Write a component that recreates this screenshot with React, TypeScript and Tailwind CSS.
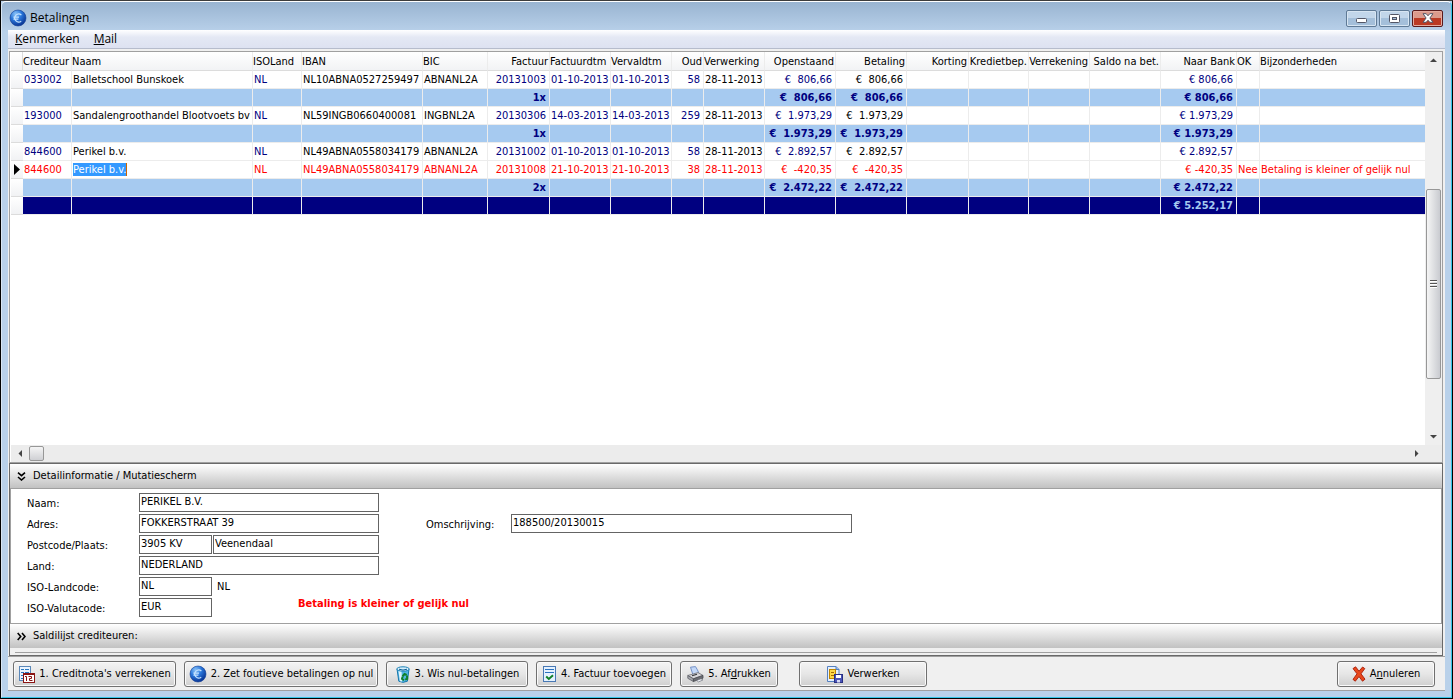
import type { ReactNode } from "react";

type Column = {
    title: string;
    width: string;
    right?: boolean;
    navy?: boolean;
};

const columns: Column[] = [
    { title: "Crediteur", width: "w-[49px]", navy: true },
    { title: "Naam", width: "w-[181px]" },
    { title: "ISOLand", width: "w-[49px]", navy: true },
    { title: "IBAN", width: "w-[121px]" },
    { title: "BIC", width: "w-[65px]" },
    { title: "Factuur", width: "w-[62px]", right: true, navy: true },
    { title: "Factuurdtm", width: "w-[61px]", navy: true },
    { title: "Vervaldtm", width: "w-[61px]", navy: true },
    { title: "Oud", width: "w-[32px]", right: true, navy: true },
    { title: "Verwerking", width: "w-[61px]" },
    { title: "Openstaand", width: "w-[71px]", right: true, navy: true },
    { title: "Betaling", width: "w-[71px]", right: true },
    { title: "Korting", width: "w-[62px]", right: true },
    { title: "Kredietbep.", width: "w-[60px]", right: true },
    { title: "Verrekening", width: "w-[61px]", right: true },
    { title: "Saldo na bet.", width: "w-[71px]", right: true },
    { title: "Naar Bank", width: "w-[76px]", right: true, navy: true },
    { title: "OK", width: "w-[23px]" },
    { title: "Bijzonderheden", width: "w-auto" },
];

type Row = {
    kind: "normal" | "error" | "subtotal" | "total";
    cells: string[];
};

const rows: Row[] = [
    {
        kind: "normal",
        cells: ["033002", "Balletschool Bunskoek", "NL", "NL10ABNA0527259497", "ABNANL2A", "20131003", "01-10-2013", "01-10-2013", "58", "28-11-2013", "€  806,66", "€  806,66", "", "", "", "", "€ 806,66", "", ""],
    },
    {
        kind: "subtotal",
        cells: ["", "", "", "", "", "1x", "", "", "", "", "€  806,66", "€  806,66", "", "", "", "", "€ 806,66", "", ""],
    },
    {
        kind: "normal",
        cells: ["193000", "Sandalengroothandel Blootvoets bv", "NL", "NL59INGB0660400081", "INGBNL2A", "20130306", "14-03-2013", "14-03-2013", "259", "28-11-2013", "€  1.973,29", "€  1.973,29", "", "", "", "", "€ 1.973,29", "", ""],
    },
    {
        kind: "subtotal",
        cells: ["", "", "", "", "", "1x", "", "", "", "", "€  1.973,29", "€  1.973,29", "", "", "", "", "€ 1.973,29", "", ""],
    },
    {
        kind: "normal",
        cells: ["844600", "Perikel b.v.", "NL", "NL49ABNA0558034179", "ABNANL2A", "20131002", "01-10-2013", "01-10-2013", "58", "28-11-2013", "€  2.892,57", "€  2.892,57", "", "", "", "", "€ 2.892,57", "", ""],
    },
    {
        kind: "error",
        cells: ["844600", "Perikel b.v.", "NL", "NL49ABNA0558034179", "ABNANL2A", "20131008", "21-10-2013", "21-10-2013", "38", "28-11-2013", "€  -420,35", "€  -420,35", "", "", "", "", "€ -420,35", "Nee", "Betaling is kleiner of gelijk nul"],
    },
    {
        kind: "subtotal",
        cells: ["", "", "", "", "", "2x", "", "", "", "", "€  2.472,22", "€  2.472,22", "", "", "", "", "€ 2.472,22", "", ""],
    },
    {
        kind: "total",
        cells: ["", "", "", "", "", "", "", "", "", "", "", "", "", "", "", "", "€ 5.252,17", "", ""],
    },
];

const rowStyles = {
    normal: "bg-white",
    error: "bg-white text-[#ff0000]",
    subtotal: "bg-[#a6caf0] font-bold text-[#000080]",
    total: "bg-[#000080] font-bold text-[#a6caf0]",
};

/* Icons */
const EuroIcon = ({ id }: { id: string }) => (
    <svg width="18" height="18" viewBox="0 0 18 18" className="shrink-0" aria-hidden="true">
        <defs>
            <radialGradient id={id} cx="0.35" cy="0.25" r="0.8">
                <stop offset="0" stopColor="#8cc4f8" />
                <stop offset="0.45" stopColor="#2b78dc" />
                <stop offset="1" stopColor="#062f8e" />
            </radialGradient>
        </defs>
        <circle cx="9" cy="9" r="8" fill={`url(#${id})`} stroke="#123f96" strokeWidth="0.6" />
        <path d="M12.4 6A4 4 0 1 0 12.2 12.2M4.4 8.2h5.6M4.4 10.2h5" fill="none" stroke="#c4e2ff" strokeWidth="1.2" />
    </svg>
);

const CreditNoteIcon = () => (
    <svg width="17" height="17" viewBox="0 0 17 17" className="shrink-0" aria-hidden="true">
        <rect x="1.5" y="0.5" width="11" height="14" fill="#eaf4ff" stroke="#5a87b8" />
        <path d="M3 3.5h3M7 3.5h4M3 6.5h3M7 6.5h4M3 9.5h3M3 12.5h3" stroke="#2a78c0" />
        <rect x="5.5" y="7.5" width="11" height="9" fill="#fff" stroke="#8b1414" />
        <path d="M5 8h12" stroke="#8b1414" strokeWidth="2" />
        <path d="M7 10.5h1.5V15M10.5 10.5h3v2h-2v2h3" fill="none" stroke="#8b1414" />
    </svg>
);

const BinIcon = () => (
    <svg width="16" height="17" viewBox="0 0 16 17" className="shrink-0" aria-hidden="true">
        <path d="M2 3h12l-1.6 12.2Q8 17.5 3.8 15.2z" fill="#52b4e4" stroke="#1677ac" />
        <path d="M3.5 5l1.3 10q1.3.7 2.4.6L6.5 5z" fill="#dff4fc" />
        <ellipse cx="8" cy="3" rx="6.2" ry="2.2" fill="#d4eefb" stroke="#1c82b8" />
        <path d="M4 3.2q4 1.8 8 0" stroke="#0c5f94" fill="none" />
        <path d="M7.5 10.4l2-2.4 2.2 1M12 9.6l.2 3.2-2 .8M9 14.2l-2-1.4.6-2" fill="none" stroke="#0f8028" strokeWidth="2" />
    </svg>
);

const InvoiceIcon = () => (
    <svg width="15" height="16" viewBox="0 0 15 16" className="shrink-0" aria-hidden="true">
        <rect x="1.5" y="0.5" width="12" height="15" fill="#e4f1ff" stroke="#4878b4" />
        <path d="M3 3.5h9M3 6.5h9" stroke="#2b72bf" />
        <path d="M4.2 10.5l2.6 2.4 4.2-3.6" fill="none" stroke="#118028" strokeWidth="2" />
    </svg>
);

const PrinterIcon = () => (
    <svg width="17" height="17" viewBox="0 0 17 17" className="shrink-0" aria-hidden="true">
        <path d="M3.5 1.2L8.5.6q2 3 3.6 7L6 9z" fill="#c3d8f8" stroke="#7591c6" />
        <path d="M.8 9.5L11 6.6l5 2.8-9.6 3.4z" fill="#d8d8dc" stroke="#6c6d74" strokeWidth="0.8" />
        <path d="M.8 9.5v2.8l5.6 3.2v-2.7z" fill="#a5a7ae" stroke="#5c5d63" strokeWidth="0.8" />
        <path d="M6.4 12.8L16 9.4v2.8l-9.6 3.3z" fill="#6b6d74" stroke="#4a4b50" strokeWidth="0.8" />
        <path d="M9.5 14.4l4.5-1.6 2 1.1-4.4 2z" fill="#f1f3f8" stroke="#70737b" strokeWidth="0.7" />
        <path d="M5 9.8l5-1.6" stroke="#33353a" strokeWidth="1.2" />
    </svg>
);

const ProcessIcon = () => (
    <svg width="17" height="17" viewBox="0 0 17 17" className="shrink-0" aria-hidden="true">
        <path d="M1.5.5H10l3 3v12H1.5z" fill="#e6f0fd" stroke="#5480c0" />
        <path d="M10 .5v3h3" fill="#9dbcea" stroke="#5480c0" />
        <rect x="3.5" y="3.5" width="6" height="9" fill="#fcd84a" stroke="#c08600" />
        <path d="M5 6.5h3M5 9.5h3" stroke="#a86c00" />
        <rect x="8.5" y="8.5" width="8" height="8" fill="#4b55b8" stroke="#282f83" />
        <path d="M10 9h5v3h-5z" fill="#fff" />
        <path d="M11 14h3v2.5h-3z" fill="#d6daf6" />
    </svg>
);

const CrossIcon = () => (
    <svg width="14" height="16" viewBox="0 0 14 16" className="shrink-0" aria-hidden="true">
        <path d="M1 2.6L3.6.8 7 5.2 10.6 1l2.2 1.6L9 7.8l4 5.4-2.5 2L7 10.6l-3.7 4.6L1 13.4l4-5.6z" fill="#e8481c" stroke="#a81c08" strokeWidth="0.9" />
    </svg>
);

const Chevrons = ({ open }: { open?: boolean }) => (
    <svg width="9" height="9" viewBox="0 0 9 9" className="shrink-0" aria-hidden="true">
        <path
            d={open ? "M1 .7l3.5 3L8 .7M1 5l3.5 3L8 5" : "M.7 1l3 3.5-3 3.5M5 1l3 3.5L5 8"}
            fill="none"
            stroke="#000"
            strokeWidth="1.6"
        />
    </svg>
);

const Arrow = ({ d }: { d: string }) => (
    <svg width="7" height="7" viewBox="0 0 7 7" aria-hidden="true">
        <path d={d} fill="#444" />
    </svg>
);

/* Window caption with the minimize, maximize and close buttons */
const TitleBar = () => (
    <header className="flex h-[28px] items-center gap-[3px] pt-[4px] pr-[2px] pl-px">
        <EuroIcon id="euro-title" />
        <h1 className="flex-1 font-['Open_Sans','Noto_Sans',sans-serif] text-[12px] text-black">Betalingen</h1>
        <div className="flex gap-[2px]">
            <button aria-label="Minimaliseren" className="flex h-[17px] w-[31px] items-center justify-center rounded-[2px] border border-[#5f7a96] bg-linear-to-b from-[#c2d6ea] from-50% to-[#a4bfda] to-50% shadow-[inset_0_0_0_1px_#d7e5f2]">
                <svg width="11" height="5" viewBox="0 0 11 5" className="mt-1" aria-hidden="true">
                    <rect x="0.5" y="0.5" width="10" height="4" rx="1" fill="#fff" stroke="#535666" />
                </svg>
            </button>
            <button aria-label="Maximaliseren" className="flex h-[17px] w-[31px] items-center justify-center rounded-[2px] border border-[#5f7a96] bg-linear-to-b from-[#c2d6ea] from-50% to-[#a4bfda] to-50% shadow-[inset_0_0_0_1px_#d7e5f2]">
                <svg width="11" height="9" viewBox="0 0 11 9" aria-hidden="true">
                    <rect x="0.5" y="0.5" width="10" height="8" rx="1" fill="#fff" stroke="#535666" />
                    <rect x="3.5" y="3.5" width="4" height="2" fill="#a4bfda" stroke="#535666" />
                </svg>
            </button>
            <button aria-label="Sluiten" className="flex h-[17px] w-[31px] items-center justify-center rounded-[2px] border border-[#5a1a1c] bg-linear-to-b from-[#dc9a8c] from-50% to-[#bb3a24] to-50% shadow-[inset_0_0_0_1px_#e5aca0]">
                <svg width="12" height="10" viewBox="0 0 12 10" aria-hidden="true">
                    <path d="M1 .7h3.2L6 2.8 7.8.7H11L7.9 5l3.1 4.3H7.8L6 7.2 4.2 9.3H1L4.1 5z" fill="#fff" stroke="#535666" />
                </svg>
            </button>
        </div>
    </header>
);

const PaymentsTable = () => (
    <table className="w-full table-fixed border-separate border-spacing-0 text-left">
        <colgroup>
            <col className="w-[12px]" />
            {columns.map((column) => (
                <col key={column.title} className={column.width} />
            ))}
        </colgroup>
        <thead>
            <tr className="h-[19px] bg-linear-to-b from-white to-[#f1f2f4]">
                <th className="border-r border-b border-[#dcdcdc] p-0" aria-label="Rij" />
                {columns.map((column) => (
                    <th
                        key={column.title}
                        className={`overflow-hidden border-r border-b border-r-[#ececec] border-b-[#dcdcdc] p-0 pt-[2px] font-normal whitespace-nowrap last:border-r-0 ${column.right ? "pr-px text-right" : ""}`}
                    >
                        {column.title}
                    </th>
                ))}
            </tr>
        </thead>
        <tbody>
            {rows.map((row, index) => (
                <tr key={index} className={`h-[18px] ${rowStyles[row.kind]}`}>
                    <td className="border-b border-[#dcdcdc] bg-linear-to-b from-white to-[#f1f2f4] p-0">
                        {row.kind === "error" && (
                            <svg width="7" height="11" viewBox="0 0 7 11" className="ml-[3px]" aria-hidden="true">
                                <path d="M0 0v11L6 5.5z" fill="#000" />
                            </svg>
                        )}
                    </td>
                    {row.cells.map((cell, i) => (
                        <td
                            key={columns[i].title}
                            className={`overflow-hidden border-r border-b border-[#ececec] p-0 pt-px whitespace-pre last:border-r-0 ${columns[i].right ? "pr-[3px] text-right" : "pl-px"} ${row.kind === "normal" && columns[i].navy ? "text-[#000080]" : ""}`}
                        >
                            {row.kind === "error" && columns[i].title === "Naam" ? (
                                <span className="border-r border-[#cc6600] bg-[#3399ff] text-white">{cell}</span>
                            ) : (
                                cell
                            )}
                        </td>
                    ))}
                </tr>
            ))}
        </tbody>
    </table>
);

const VerticalScrollBar = () => (
    <div className="flex w-[17px] shrink-0 flex-col bg-[#efefef] px-px">
        <button aria-label="Omhoog" className="flex h-[17px] items-center justify-center">
            <Arrow d="M0 5l3.5-3.5L7 5z" />
        </button>
        <div className="grow-[120] basis-0" />
        <div className="flex grow-[188] basis-0 flex-col items-center justify-center gap-px rounded-[2px] border border-[#979797] bg-linear-to-r from-[#f5f5f5] to-[#c9cbd0]">
            <span className="h-[2px] w-[7px] border-t border-[#555] bg-white" />
            <span className="h-[2px] w-[7px] border-t border-[#555] bg-white" />
            <span className="h-[2px] w-[7px] border-t border-[#555] bg-white" />
        </div>
        <div className="grow-[49] basis-0" />
        <button aria-label="Omlaag" className="flex h-[17px] items-center justify-center">
            <Arrow d="M0 2h7L3.5 5.5z" />
        </button>
    </div>
);

const HorizontalScrollBar = () => (
    <div className="flex h-[17px] bg-[#ececec] py-px pr-[17px]">
        <button aria-label="Links" className="flex w-[18px] items-center justify-center">
            <Arrow d="M5 0v7L1.5 3.5z" />
        </button>
        <div className="w-[15px] rounded-[2px] border border-[#979797] bg-linear-to-b from-[#f5f5f5] to-[#cfd0d4]" />
        <div className="flex-1" />
        <button aria-label="Rechts" className="flex w-[17px] items-center justify-center">
            <Arrow d="M2 0v7l3.5-3.5z" />
        </button>
    </div>
);

const SectionHeader = ({ open, children }: { open?: boolean; children: ReactNode }) => (
    <button
        aria-expanded={!!open}
        className="flex h-[24px] w-full items-center gap-[7px] bg-linear-to-b from-white to-[#c2c2c2] pl-[7px] text-left"
    >
        <Chevrons open={open} />
        {children}
    </button>
);

const labelStyle = "w-[112px] shrink-0 pt-[4px]";
const inputStyle = "h-[19px] shrink-0 rounded-none border border-[#646464] bg-white px-px pb-[2px] outline-none";

const DetailForm = () => (
    <form className="flex items-start border border-[#a0a0a0] bg-white pt-[4px] pb-[6px] pl-[16px]">
        <div className="flex w-[399px] flex-col gap-[2px]">
            <div className="flex">
                <label htmlFor="naam" className={labelStyle}>Naam:</label>
                <input id="naam" defaultValue="PERIKEL B.V." className={`w-[240px] ${inputStyle}`} />
            </div>
            <div className="flex">
                <label htmlFor="adres" className={labelStyle}>Adres:</label>
                <input id="adres" defaultValue="FOKKERSTRAAT 39" className={`w-[240px] ${inputStyle}`} />
            </div>
            <div className="flex gap-px">
                <div className="flex">
                    <label htmlFor="postcode" className={labelStyle}>Postcode/Plaats:</label>
                    <input id="postcode" defaultValue="3905 KV" className={`w-[73px] ${inputStyle}`} />
                </div>
                <input aria-label="Plaats" defaultValue="Veenendaal" className={`w-[166px] ${inputStyle}`} />
            </div>
            <div className="flex">
                <label htmlFor="land" className={labelStyle}>Land:</label>
                <input id="land" defaultValue="NEDERLAND" className={`w-[240px] ${inputStyle}`} />
            </div>
            <div className="flex">
                <label htmlFor="iso-land" className={labelStyle}>ISO-Landcode:</label>
                <input id="iso-land" defaultValue="NL" className={`w-[73px] ${inputStyle}`} />
                <span className="pt-[3px] pl-[5px]">NL</span>
            </div>
            <div className="flex">
                <label htmlFor="iso-valuta" className={labelStyle}>ISO-Valutacode:</label>
                <input id="iso-valuta" defaultValue="EUR" className={`w-[73px] ${inputStyle}`} />
                <strong className="pl-[86px] leading-[11px] font-bold whitespace-nowrap text-[#ff0000]">
                    Betaling is kleiner of gelijk nul
                </strong>
            </div>
        </div>
        <div className="flex pt-[21px]">
            <label htmlFor="omschrijving" className="w-[85px] pt-[4px]">Omschrijving:</label>
            <input id="omschrijving" defaultValue="188500/20130015" className={`w-[341px] ${inputStyle}`} />
        </div>
    </form>
);

const ToolButton = ({ icon, width, children }: { icon: ReactNode; width: string; children: ReactNode }) => (
    <button
        className={`flex h-[26px] items-center justify-center gap-1 rounded-[3px] border border-[#707070] bg-linear-to-b from-[#f4f4f4] via-[#e6e6e6] via-50% to-[#cfcfcf] whitespace-nowrap shadow-[inset_0_0_0_1px_#fafafa] ${width}`}
    >
        {icon}
        <span>{children}</span>
    </button>
);

const App = () => {
    return (
        <div className="flex min-h-screen flex-col border border-t-[#3c3c3c] border-r-black border-b-black border-l-black bg-[#b9d1ea] font-['DejaVu_Sans_Condensed','DejaVu_Sans',sans-serif] text-[11px] leading-[14px] font-normal text-black">
            <div className="flex flex-1 flex-col rounded-t-[5px] border border-t-white border-r-[#35c5e8] border-b-[#35c5e8] border-l-[#d9e6f3] bg-linear-to-b from-[#99b4d1] to-[#b9d1ea] to-[30px] px-[6px] pb-[6px]">
                <TitleBar />

                <main className="flex flex-1 flex-col border-b border-[#a0a0a0] bg-[#f0f0f0]">
                    {/* Menu */}
                    <nav className="flex h-[19px] items-center gap-[14px] border-b border-[#b6bccc] bg-linear-to-b from-white via-[#e4e8f4] via-40% to-[#dde2f1] pl-[7px] font-['Open_Sans','Noto_Sans',sans-serif] text-[12px]">
                        <button><u>K</u>enmerken</button>
                        <button><u>M</u>ail</button>
                    </nav>

                    {/* Payments grid */}
                    <section className="mt-[2px] mr-[2px] ml-px flex flex-1 flex-col border border-[#a0a0a0] bg-white pl-px">
                        <div className="flex flex-1">
                            <div className="min-w-0 flex-1">
                                <PaymentsTable />
                            </div>
                            <VerticalScrollBar />
                        </div>
                        <HorizontalScrollBar />
                    </section>

                    {/* Detail panels */}
                    <section className="mr-[2px] ml-px border border-[#696969]">
                        <SectionHeader open>Detailinformatie / Mutatiescherm</SectionHeader>
                        <DetailForm />
                        <SectionHeader>Saldilijst crediteuren:</SectionHeader>
                        <div className="mx-[5px] mt-1 mb-[2px] h-px bg-[#a0a0a0]" />
                    </section>

                    {/* Actions */}
                    <footer className="flex items-center gap-2 border-t border-[#a0a0a0] pt-[4px] pr-[10px] pb-[3px] pl-[5px]">
                        <ToolButton icon={<CreditNoteIcon />} width="w-[163px]">1. Creditnota's verrekenen</ToolButton>
                        <ToolButton icon={<EuroIcon id="euro-button" />} width="w-[194px]">2. Zet foutieve betalingen op nul</ToolButton>
                        <ToolButton icon={<BinIcon />} width="w-[142px]">3. Wis nul-betalingen</ToolButton>
                        <ToolButton icon={<InvoiceIcon />} width="w-[136px]">4. Factuur toevoegen</ToolButton>
                        <ToolButton icon={<PrinterIcon />} width="w-[98px]">5. Af<u>d</u>rukken</ToolButton>
                        <div className="ml-[13px] flex-1">
                            <ToolButton icon={<ProcessIcon />} width="w-[128px]">Verwerken</ToolButton>
                        </div>
                        <ToolButton icon={<CrossIcon />} width="w-[98px]">A<u>n</u>nuleren</ToolButton>
                    </footer>
                </main>
            </div>
        </div>
    );
};

export default App;
